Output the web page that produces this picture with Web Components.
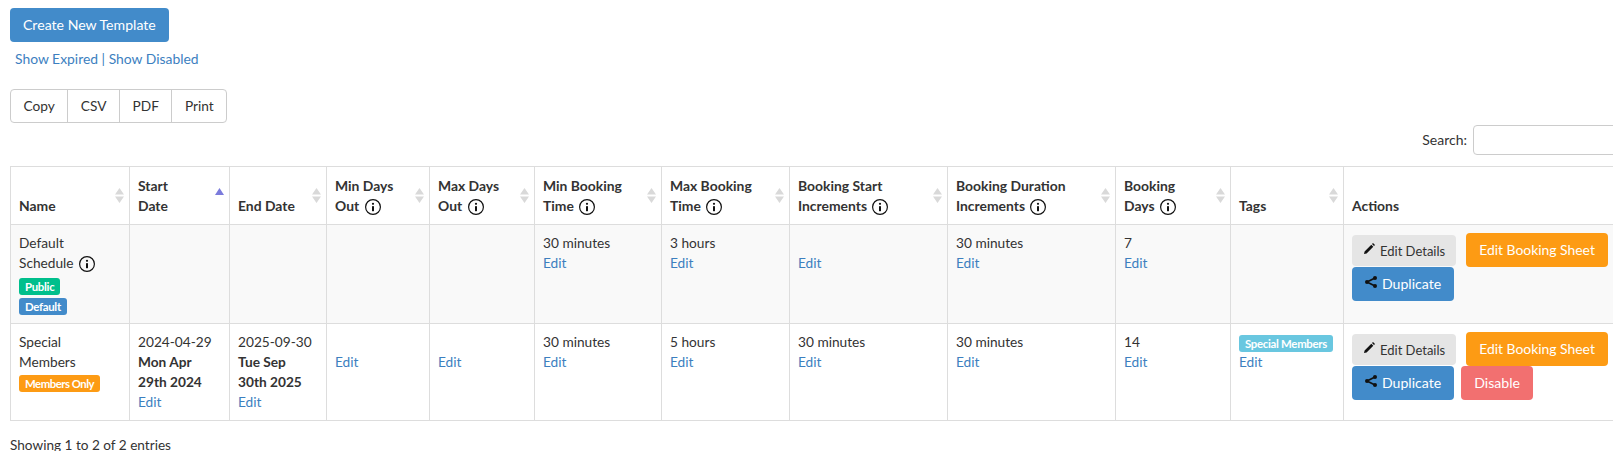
<!DOCTYPE html>
<html>
<head>
<meta charset="utf-8">
<title>Booking Templates</title>
<style>
  html, body { margin: 0; overflow: hidden; background: #fff; }
  body { font: 13.7px/20px Lato, "Open Sans", sans-serif; color: #333; }
</style>
</head>
<body>
<template-page></template-page>
<script>
// --- small pieces ---
class UiBtn extends HTMLElement {
  constructor() {
    super();
    this.attachShadow({ mode: 'open' });
    this.shadowRoot.innerHTML = `
      <style>
        :host { display: inline-flex; align-items: center; box-sizing: border-box; height: 34px;
          padding: 0 13px; border-radius: 4px; background: #428bca; color: #fff; white-space: nowrap;
          font-size: 14.1px; cursor: pointer; }
        :host([kind=warn]) { background: #fd9b14; font-size: 13.9px; }
        :host([kind=danger]) { background: #f27070; }
        :host([kind=plain]) { background: #e5e5e5; color: #333; height: 31px; font-size: 13px; padding: 0 11px 0 12px; }
        ::slotted(svg) { margin: -4px 5px 0 0; }
      </style>
      <slot></slot>`;
  }
}
customElements.define('ui-btn', UiBtn);

class UiBadge extends HTMLElement {
  constructor() {
    super();
    this.attachShadow({ mode: 'open' });
    this.shadowRoot.innerHTML = `
      <style>
        :host { display: block; width: fit-content; box-sizing: border-box; height: 17px; padding: 0 6px; border-radius: 3px;
          background: #428bca; color: #fff; font-size: 11.4px; line-height: 17px; font-weight: 700; letter-spacing: -.3px; white-space: nowrap; }
        :host([kind=green]) { background: #00bf8c; }
        :host([kind=orange]) { background: #fd9b14; letter-spacing: -.5px; }
        :host([kind=teal]) { background: #69c7e0; letter-spacing: -.3px; }
      </style>
      <slot></slot>`;
  }
}
customElements.define('ui-badge', UiBadge);

class InfoIcon extends HTMLElement {
  constructor() {
    super();
    this.attachShadow({ mode: 'open' });
    this.shadowRoot.innerHTML = `
      <style>:host { display: inline-block; width: 16px; height: 16px; margin-left: 2px; vertical-align: -4px; } svg { display: block; }</style>
      <svg width="16" height="16" viewBox="0 0 16 16" fill="#111">
        <path d="M8 0a8 8 0 1 0 0 16A8 8 0 0 0 8 0zm0 1.200a6.800 6.800 0 1 1 0 13.600A6.800 6.800 0 0 1 8 1.200z" fill-rule="evenodd"/>
        <circle cx="8" cy="4.800" r="1.100"/><rect x="7" y="7" width="2" height="5.200" rx=".4"/>
      </svg>`;
  }
}
customElements.define('info-icon', InfoIcon);

class EditLink extends HTMLElement {
  constructor() {
    super();
    this.attachShadow({ mode: 'open' });
    this.shadowRoot.innerHTML = `
      <style>:host { display: block; color: #3d7fbf; cursor: pointer; } :host([blank]) { margin-top: 20px; }</style>
      <slot>Edit</slot>`;
  }
}
customElements.define('edit-link', EditLink);

class SortTh extends HTMLElement {
  constructor() {
    super();
    this.attachShadow({ mode: 'open' });
    const up = this.hasAttribute('asc');
    this.shadowRoot.innerHTML = `
      <style>
        :host { display: block; font-weight: 700; font-size: 13.9px; }
        svg { position: absolute; right: 5px; top: 21px; }
      </style>
      <slot></slot>
      <svg width="9" height="15" viewBox="0 0 9 15">
        ${up ? '<path d="M4.500 0L9 7H0z" fill="#7b7bdc"/>'
             : '<path d="M4.500 0L9 6.500H0zM0 8.500h9L4.500 15z" fill="#d9d9d9"/>'}
      </svg>`;
  }
}
customElements.define('sort-th', SortTh);

// --- action buttons for a row ---
const pencil = `<svg width="11" height="11" viewBox="0 0 11 11" fill="#111"><path d="M0 11l.6-2.600L7.300 1.700l2 2L2.600 10.400zM8 1l1-1 2 2-1 1z"/></svg>`;
const share = `<svg width="12" height="12" viewBox="0 0 12 12" fill="#111"><circle cx="10" cy="2" r="2"/><circle cx="10" cy="10" r="2"/><circle cx="2" cy="6" r="2"/><path d="M1.600 5.300l8-4 .8 1.400-8 4zM2.400 5.300l8 4-.8 1.400-8-4z"/></svg>`;

class RowActions extends HTMLElement {
  constructor() {
    super();
    this.attachShadow({ mode: 'open' });
    this.shadowRoot.innerHTML = `
      <style>
        :host { display: block; }
        .line { display: flex; align-items: flex-start; }
        .details { margin-top: 2px; }
        .sheet { margin-left: 10px; }
        .gap { margin-left: 7px; }
      </style>
      <div class="line">
        <ui-btn kind="plain" class="details">${pencil}Edit Details</ui-btn>
        <ui-btn kind="warn" class="sheet">Edit Booking Sheet</ui-btn>
      </div>
      <div class="line">
        <ui-btn>${share}Duplicate</ui-btn>
        ${this.hasAttribute('can-disable') ? '<ui-btn kind="danger" class="gap">Disable</ui-btn>' : ''}
      </div>`;
  }
}
customElements.define('row-actions', RowActions);

// --- table ---
class ScheduleTable extends HTMLElement {
  constructor() {
    super();
    this.attachShadow({ mode: 'open' });
    const widths = [119, 100, 97, 103, 105, 127, 128, 158, 168, 115, 113, 285];
    this.shadowRoot.innerHTML = `
      <style>
        :host { display: block; }
        table { border-collapse: collapse; table-layout: fixed; width: ${widths.reduce((a, b) => a + b)}px; }
        th, td { border: 1px solid #ddd; padding: 8px; text-align: left; }
        th { position: relative; vertical-align: bottom; height: 41px; }
        td { vertical-align: top; }
        tbody tr:first-child td { background: #f9f9f9; }
        tr.first td { height: 82px; }
        b { font-weight: 700; }
      </style>
      <table>
        <colgroup>${widths.map(w => `<col style="width:${w}px">`).join('')}</colgroup>
        <thead>
          <tr>
            <th><sort-th>Name</sort-th></th>
            <th><sort-th asc>Start<br>Date</sort-th></th>
            <th><sort-th>End Date</sort-th></th>
            <th><sort-th>Min Days<br>Out <info-icon></info-icon></sort-th></th>
            <th><sort-th>Max Days<br>Out <info-icon></info-icon></sort-th></th>
            <th><sort-th>Min Booking<br>Time <info-icon></info-icon></sort-th></th>
            <th><sort-th>Max Booking<br>Time <info-icon></info-icon></sort-th></th>
            <th><sort-th>Booking Start<br>Increments <info-icon></info-icon></sort-th></th>
            <th><sort-th>Booking Duration<br>Increments <info-icon></info-icon></sort-th></th>
            <th><sort-th>Booking<br>Days <info-icon></info-icon></sort-th></th>
            <th><sort-th>Tags</sort-th></th>
            <th><sort-th>Actions</sort-th></th>
          </tr>
        </thead>
        <tbody>
          <tr class="first">
            <td>Default<br>Schedule <info-icon></info-icon>
              <ui-badge kind="green" style="margin-top:5px">Public</ui-badge>
              <ui-badge style="margin-top:3px">Default</ui-badge></td>
            <td></td>
            <td></td>
            <td></td>
            <td></td>
            <td>30 minutes<edit-link></edit-link></td>
            <td>3 hours<edit-link></edit-link></td>
            <td><edit-link blank></edit-link></td>
            <td>30 minutes<edit-link></edit-link></td>
            <td>7<edit-link></edit-link></td>
            <td></td>
            <td><row-actions></row-actions></td>
          </tr>
          <tr>
            <td>Special<br>Members<ui-badge kind="orange" style="margin-top:3px">Members Only</ui-badge></td>
            <td>2024-04-29<br><b>Mon Apr<br>29th 2024</b><edit-link></edit-link></td>
            <td>2025-09-30<br><b>Tue Sep<br>30th 2025</b><edit-link></edit-link></td>
            <td><edit-link blank></edit-link></td>
            <td><edit-link blank></edit-link></td>
            <td>30 minutes<edit-link></edit-link></td>
            <td>5 hours<edit-link></edit-link></td>
            <td>30 minutes<edit-link></edit-link></td>
            <td>30 minutes<edit-link></edit-link></td>
            <td>14<edit-link></edit-link></td>
            <td><ui-badge kind="teal" style="margin-top:3px">Special Members</ui-badge><edit-link></edit-link></td>
            <td><row-actions can-disable></row-actions></td>
          </tr>
        </tbody>
      </table>`;
  }
}
customElements.define('schedule-table', ScheduleTable);

// --- page ---
class TemplatePage extends HTMLElement {
  constructor() {
    super();
    this.attachShadow({ mode: 'open' });
    this.shadowRoot.innerHTML = `
      <style>
        :host { display: block; padding: 8px 0 0 10px; width: 1640px; box-sizing: border-box; }
        .links { margin: 7px 0 0 5px; color: #3d7fbf; font-size: 13.9px; }
        .export { display: inline-flex; margin-top: 20px; height: 34px; box-sizing: border-box;
          border: 1px solid #ccc; border-radius: 4px; vertical-align: top; }
        .export span { display: flex; align-items: center; padding: 0 12.500px; border-left: 1px solid #ccc; }
        .export span:first-child { border-left: 0; }
        .search { display: flex; justify-content: flex-end; align-items: center; gap: 6px; margin-top: 2px; width: 1613px; font-size: 14px; }
        .search input { box-sizing: border-box; width: 150px; height: 30px; border: 1px solid #ccc; border-radius: 4px; padding: 0; background: #fff; }
        schedule-table { margin-top: 11px; }
        .info { margin-top: 14px; font-size: 13.6px; }
      </style>
      <ui-btn>Create New Template</ui-btn>
      <div class="links">Show Expired | Show Disabled</div>
      <div class="export"><span>Copy</span><span>CSV</span><span>PDF</span><span>Print</span></div>
      <div class="search"><label>Search:</label><input type="search"></div>
      <schedule-table></schedule-table>
      <div class="info">Showing 1 to 2 of 2 entries</div>`;
  }
}
customElements.define('template-page', TemplatePage);
</script>
</body>
</html>
